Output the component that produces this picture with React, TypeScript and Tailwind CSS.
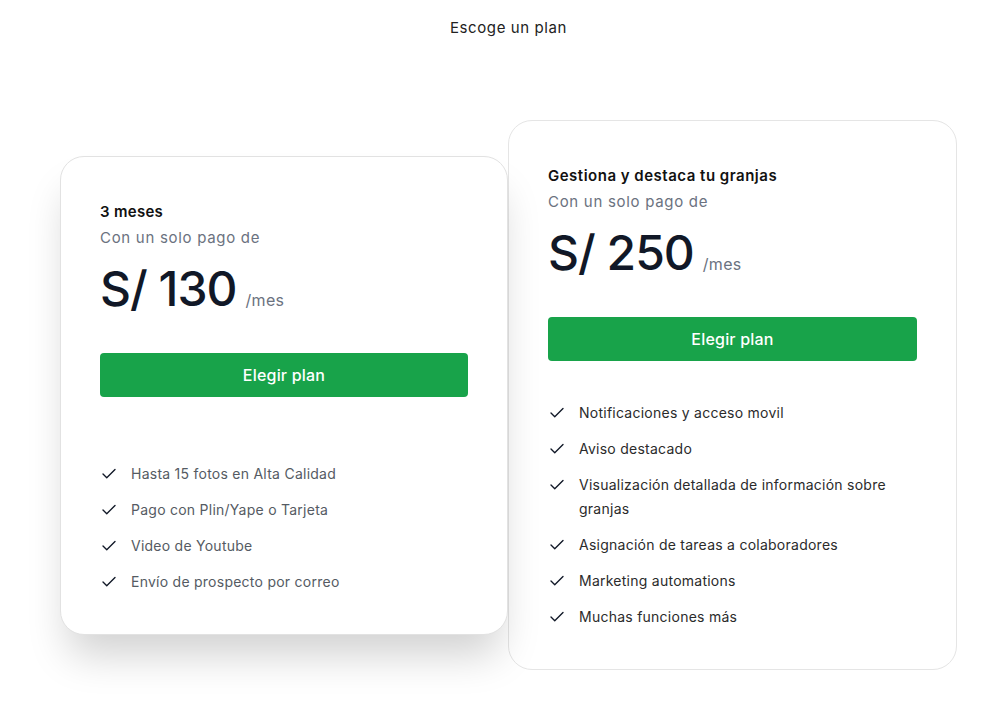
import React from "react";

const Check = () => (
  <svg width="18" height="18" viewBox="0 0 24 24" fill="none" stroke="#111827" strokeWidth="1.8" strokeLinecap="round" strokeLinejoin="round" className="shrink-0 mt-[3px]">
    <path d="M20 6 9 17l-5-5" />
  </svg>
);

function Feature({ text, dark }: { text: string; dark?: boolean }) {
  return (
    <li className="flex items-start gap-[13px]">
      <Check />
      <span className={`text-[14px] leading-6 tracking-[0.25px] ${dark ? "text-[#2b2b2b]" : "text-[#555b63]"}`}>{text}</span>
    </li>
  );
}

export default function App() {
  const f1 = [
    "Hasta 15 fotos en Alta Calidad",
    "Pago con Plin/Yape o Tarjeta",
    "Video de Youtube",
    "Envío de prospecto por correo",
  ];
  const f2 = [
    "Notificaciones y acceso movil",
    "Aviso destacado",
    "Visualización detallada de información sobre granjas",
    "Asignación de tareas a colaboradores",
    "Marketing automations",
    "Muchas funciones más",
  ];
  return (
    <div className="min-h-[704px] bg-white" style={{ fontFamily: "Inter, 'Noto Sans', sans-serif" }}>
      <div className="ml-[60px] w-[897px]">
        <h1 className="pt-[18px] text-center text-[15px] leading-5 text-[#222] tracking-[0.6px]">Escoge un plan</h1>
        <div className="mt-[82px] flex items-center">
          <div className="relative z-10 w-[448px] shrink-0 rounded-[24px] border border-[#e2e2e2] bg-white px-[39px] pt-[43px] pb-[40px] shadow-[0_28px_40px_-8px_rgba(0,0,0,0.18)]">
            <h3 className="text-[15px] font-semibold leading-6 tracking-[0.3px] text-[#111]">3 meses</h3>
            <p className="mt-[2px] text-[15px] leading-6 tracking-[0.7px] text-[#6b7280]">Con un solo pago de</p>
            <div className="mt-[11px] flex items-baseline gap-[9px]">
              <span className="text-[48px] font-medium leading-[56px] tracking-[-1px] text-[#111827]">S/ 130</span>
              <span className="text-[16px] tracking-[0.3px] text-[#6b7280]">/mes</span>
            </div>
            <button className="mt-[36px] h-[44px] w-full rounded-[4px] bg-[#18a34a] text-[16px] font-medium tracking-[0.2px] text-white">Elegir plan</button>
            <ul className="mt-[65px] flex flex-col gap-3">
              {f1.map((t) => (
                <Feature key={t} text={t} />
              ))}
            </ul>
          </div>
          <div className="w-[449px] shrink-0 rounded-[24px] border border-[#e5e5e5] bg-white px-[39px] pt-[43px] pb-[40px]">
            <h3 className="text-[15px] font-semibold leading-6 tracking-[0.5px] text-[#111]">Gestiona y destaca tu granjas</h3>
            <p className="mt-[2px] text-[15px] leading-6 tracking-[0.7px] text-[#6b7280]">Con un solo pago de</p>
            <div className="mt-[11px] flex items-baseline gap-[9px]">
              <span className="text-[48px] font-medium leading-[56px] tracking-[-1px] text-[#111827]">S/ 250</span>
              <span className="text-[16px] tracking-[0.3px] text-[#6b7280]">/mes</span>
            </div>
            <button className="mt-[36px] h-[44px] w-full rounded-[4px] bg-[#18a34a] text-[16px] font-medium tracking-[0.2px] text-white">Elegir plan</button>
            <ul className="mt-[40px] flex flex-col gap-3">
              {f2.map((t) => (
                <Feature key={t} text={t} dark />
              ))}
            </ul>
          </div>
        </div>
      </div>
    </div>
  );
}
